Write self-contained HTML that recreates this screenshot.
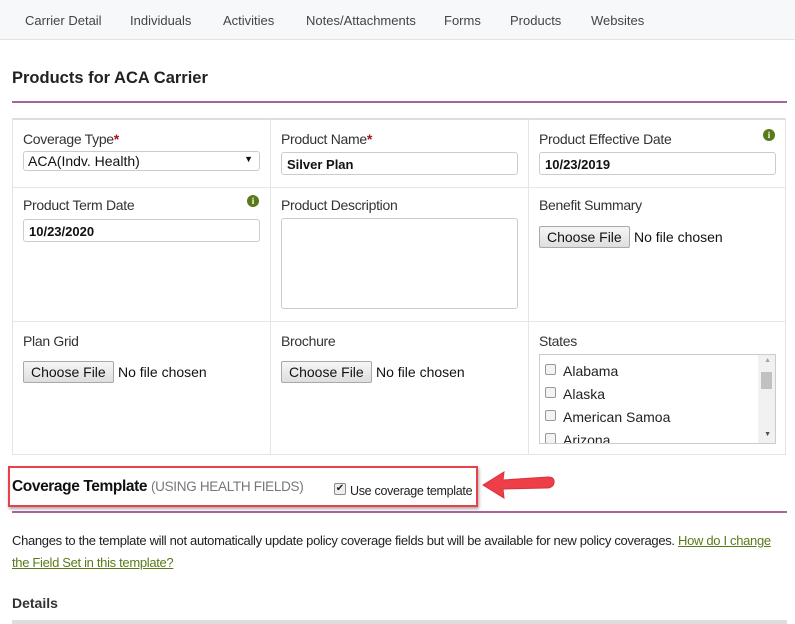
<!DOCTYPE html>
<html><head><style>
*{box-sizing:border-box;margin:0;padding:0}
body{width:795px;height:624px;overflow:hidden;background:#fff;font-family:"Liberation Sans",sans-serif;color:#333;position:relative}
.a{position:absolute}
.nav{left:0;top:0;width:795px;height:40px;background:#f7f8fa;border-bottom:1px solid #e3e3e3}
.nav span{position:absolute;top:13px;font-size:13px;color:#444}
.lbl{font-size:14px;color:#333;letter-spacing:-0.3px}
.inp{height:23px;border:1px solid #ccc;border-radius:3px;font-size:13px;font-weight:bold;color:#111;padding:4px 5px;background:#fff}
.btn{height:22px;border:1px solid #a9a9a9;border-radius:2px;background:linear-gradient(#f6f6f6,#dedede);font-size:14px;padding:2px 7px;color:#111}
.nf{font-size:14px;color:#111}
.info{width:12px;height:12px;border-radius:50%;background:#5a7a1a;color:#fff;font-size:9px;font-weight:bold;text-align:center;line-height:12px;font-family:"Liberation Serif",serif}
.cb{width:11px;height:11px;border:1px solid #999;border-radius:2px;background:#f3f3f3}
.st{font-size:14px;color:#222}
.req{color:#a4161a;font-weight:bold}
</style></head><body>
<div class="a nav">
<span style="left:25px">Carrier Detail</span><span style="left:130px">Individuals</span><span style="left:223px">Activities</span><span style="left:306px">Notes/Attachments</span><span style="left:444px">Forms</span><span style="left:510px">Products</span><span style="left:591px">Websites</span>
</div>
<div class="a" style="left:12px;top:69px;font-size:16.5px;font-weight:bold;color:#222">Products for ACA Carrier</div>
<div class="a" style="left:12px;top:101px;width:775px;height:2px;background:#a5639f"></div>

<div class="a" style="left:12px;top:118px;width:774px;height:337px;border:1px solid #e3e3e3;border-top:2px solid #ddd"></div>
<div class="a" style="left:270px;top:119px;width:1px;height:335px;background:#e6e6e6"></div>
<div class="a" style="left:528px;top:119px;width:1px;height:335px;background:#e6e6e6"></div>
<div class="a" style="left:13px;top:187px;width:772px;height:1px;background:#e6e6e6"></div>
<div class="a" style="left:13px;top:321px;width:772px;height:1px;background:#e6e6e6"></div>

<div class="a lbl" style="left:23px;top:131px">Coverage Type<span class="req">*</span></div>
<div class="a inp" style="left:23px;top:151px;width:237px;height:20px;font-weight:normal;padding:1px 4px;font-size:14px">ACA(Indv. Health)<span style="position:absolute;right:6px;top:2px;font-size:9px">▼</span></div>
<div class="a lbl" style="left:281px;top:131px">Product Name<span class="req">*</span></div>
<div class="a inp" style="left:281px;top:152px;width:237px">Silver Plan</div>
<div class="a lbl" style="left:539px;top:131px">Product Effective Date</div>
<div class="a info" style="left:763px;top:129px">i</div>
<div class="a inp" style="left:539px;top:152px;width:237px">10/23/2019</div>

<div class="a lbl" style="left:23px;top:197px">Product Term Date</div>
<div class="a info" style="left:247px;top:195px">i</div>
<div class="a inp" style="left:23px;top:219px;width:237px">10/23/2020</div>
<div class="a lbl" style="left:281px;top:197px">Product Description</div>
<div class="a inp" style="left:281px;top:218px;width:237px;height:91px"></div>
<div class="a lbl" style="left:539px;top:197px">Benefit Summary</div>
<div class="a btn" style="left:539px;top:226px">Choose File</div>
<div class="a nf" style="left:634px;top:229px">No file chosen</div>

<div class="a lbl" style="left:23px;top:333px">Plan Grid</div>
<div class="a btn" style="left:23px;top:361px">Choose File</div>
<div class="a nf" style="left:118px;top:364px">No file chosen</div>
<div class="a lbl" style="left:281px;top:333px">Brochure</div>
<div class="a btn" style="left:281px;top:361px">Choose File</div>
<div class="a nf" style="left:376px;top:364px">No file chosen</div>
<div class="a lbl" style="left:539px;top:333px">States</div>
<div class="a" style="left:539px;top:354px;width:237px;height:90px;border:1px solid #ccc;overflow:hidden">
 <div class="a" style="right:0;top:0;width:17px;height:88px;background:#f1f1f1"></div>
 <div class="a" style="right:3px;top:17px;width:11px;height:17px;background:#c1c1c1"></div>
 <div class="a" style="right:4px;top:2px;font-size:7px;color:#a3a3a3">▲</div>
 <div class="a" style="right:4px;top:76px;font-size:7px;color:#505050">▼</div>
 <div class="a cb" style="left:5px;top:9px"></div><div class="a st" style="left:23px;top:8px">Alabama</div>
 <div class="a cb" style="left:5px;top:32px"></div><div class="a st" style="left:23px;top:31px">Alaska</div>
 <div class="a cb" style="left:5px;top:55px"></div><div class="a st" style="left:23px;top:54px">American Samoa</div>
 <div class="a cb" style="left:5px;top:78px"></div><div class="a st" style="left:23px;top:77px">Arizona</div>
</div>

<div class="a" style="left:8px;top:466px;width:470px;height:41px;border:2px solid #e8414b;box-shadow:1px 2px 3px rgba(0,0,0,.35)"></div>
<div class="a" style="left:12px;top:478px;font-size:15.5px;font-weight:bold;color:#111;letter-spacing:-0.4px">Coverage Template <span style="font-weight:normal;color:#777;font-size:13.5px;letter-spacing:-0.3px">(USING HEALTH FIELDS)</span></div>
<div class="a" style="left:334px;top:483px;width:12px;height:12px;border:1px solid #888;border-radius:2px;background:#eee;font-size:10px;line-height:10px;text-align:center;color:#222">✔</div>
<div class="a" style="left:350px;top:484px;font-size:12.5px;color:#222;letter-spacing:-0.3px">Use coverage template</div>
<svg class="a" style="left:480px;top:468px" width="80" height="34" viewBox="0 0 80 34"><path d="M3 17 L24 4 L23 12 L68 9 Q75 9 74 15 Q73 20 66 20 L23 21 L24 30 Z" fill="#ee3e47" stroke="#d8323b" stroke-width="1"/></svg>
<div class="a" style="left:12px;top:511px;width:775px;height:2px;background:#a5639f"></div>
<div class="a" style="left:12px;top:530px;width:775px;font-size:13px;line-height:22px;color:#222;letter-spacing:-0.32px">Changes to the template will not automatically update policy coverage fields but will be available for new policy coverages. <span style="color:#5a7a1a;text-decoration:underline">How do I change the Field Set in this template?</span></div>
<div class="a" style="left:12px;top:595px;font-size:14px;font-weight:bold;color:#333">Details</div>
<div class="a" style="left:12px;top:620px;width:775px;height:4px;background:#ddd"></div>
</body></html>
